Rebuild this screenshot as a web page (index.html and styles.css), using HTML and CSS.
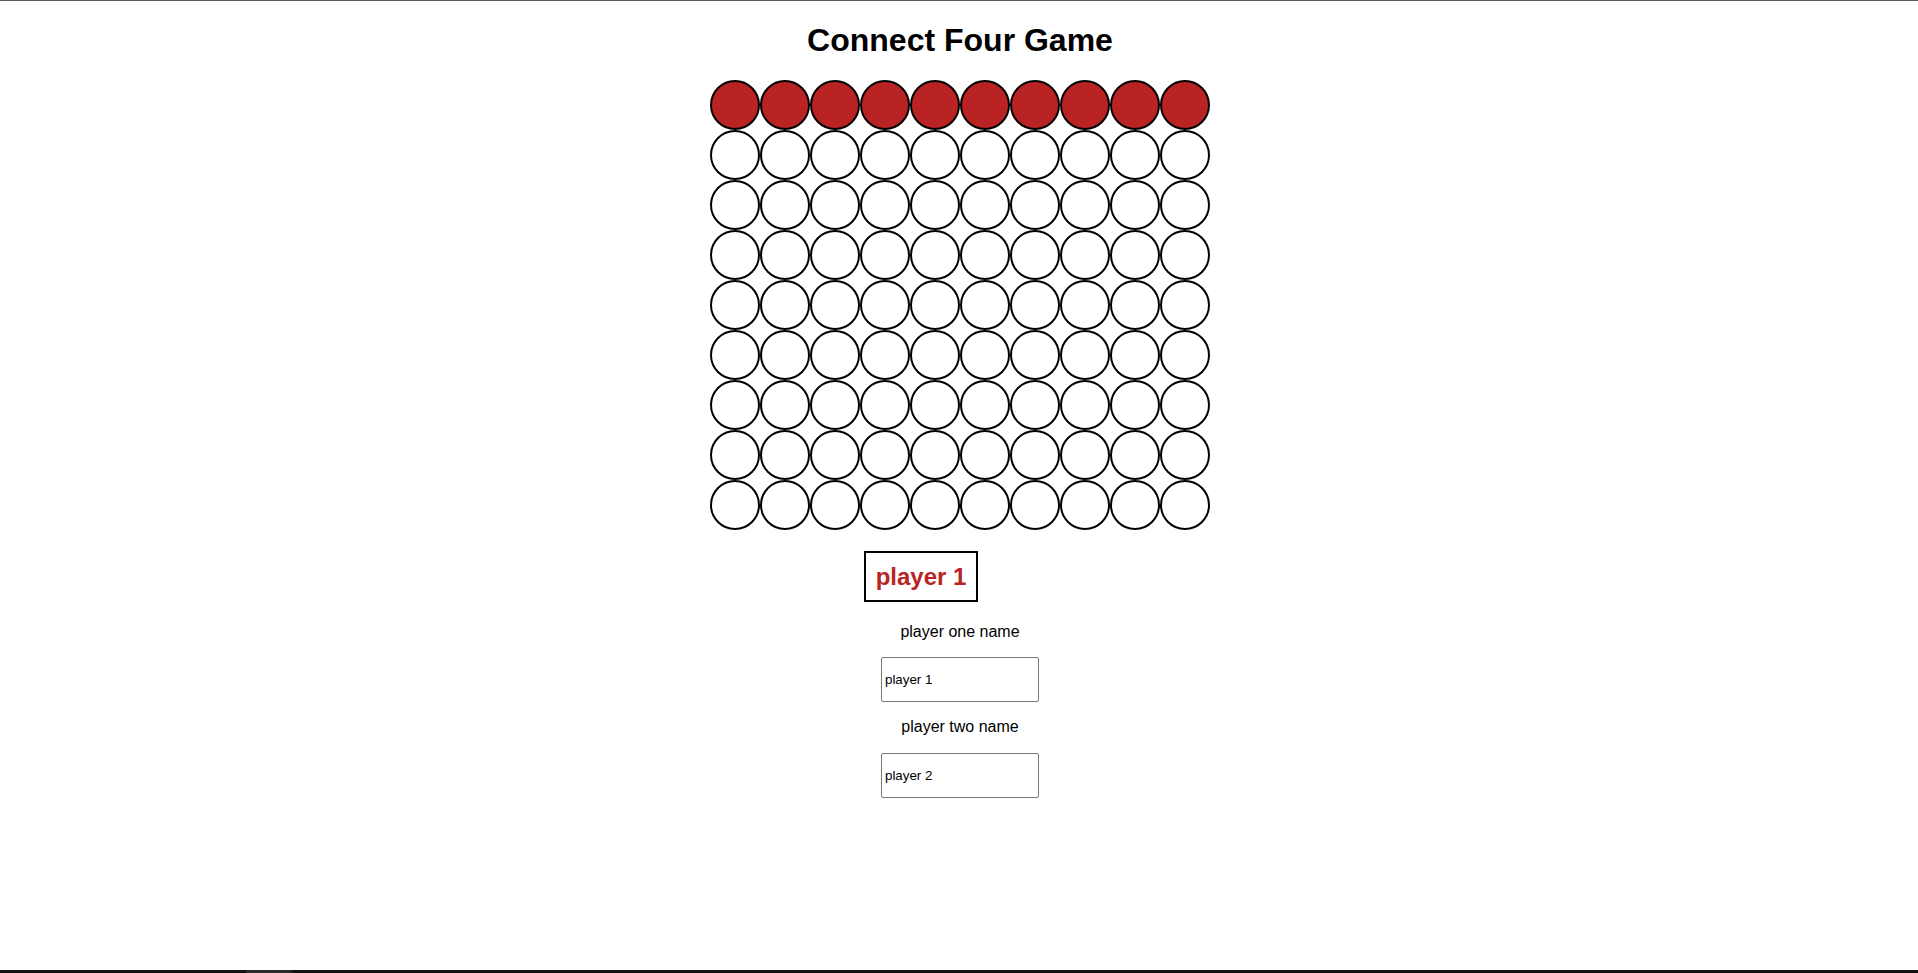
FILE: index.html
```html
<!DOCTYPE html>
<html>
<head>
<meta charset="utf-8">
<title>Connect Four Game</title>
<link rel="stylesheet" href="styles.css">
</head>
<body>
<div class="page">
  <main class="main">
    <h1 class="title">Connect Four Game</h1>
    <div class="board">
      <div class="cell red"></div><div class="cell red"></div><div class="cell red"></div><div class="cell red"></div><div class="cell red"></div><div class="cell red"></div><div class="cell red"></div><div class="cell red"></div><div class="cell red"></div><div class="cell red"></div>
      <div class="cell"></div><div class="cell"></div><div class="cell"></div><div class="cell"></div><div class="cell"></div><div class="cell"></div><div class="cell"></div><div class="cell"></div><div class="cell"></div><div class="cell"></div>
      <div class="cell"></div><div class="cell"></div><div class="cell"></div><div class="cell"></div><div class="cell"></div><div class="cell"></div><div class="cell"></div><div class="cell"></div><div class="cell"></div><div class="cell"></div>
      <div class="cell"></div><div class="cell"></div><div class="cell"></div><div class="cell"></div><div class="cell"></div><div class="cell"></div><div class="cell"></div><div class="cell"></div><div class="cell"></div><div class="cell"></div>
      <div class="cell"></div><div class="cell"></div><div class="cell"></div><div class="cell"></div><div class="cell"></div><div class="cell"></div><div class="cell"></div><div class="cell"></div><div class="cell"></div><div class="cell"></div>
      <div class="cell"></div><div class="cell"></div><div class="cell"></div><div class="cell"></div><div class="cell"></div><div class="cell"></div><div class="cell"></div><div class="cell"></div><div class="cell"></div><div class="cell"></div>
      <div class="cell"></div><div class="cell"></div><div class="cell"></div><div class="cell"></div><div class="cell"></div><div class="cell"></div><div class="cell"></div><div class="cell"></div><div class="cell"></div><div class="cell"></div>
      <div class="cell"></div><div class="cell"></div><div class="cell"></div><div class="cell"></div><div class="cell"></div><div class="cell"></div><div class="cell"></div><div class="cell"></div><div class="cell"></div><div class="cell"></div>
      <div class="cell"></div><div class="cell"></div><div class="cell"></div><div class="cell"></div><div class="cell"></div><div class="cell"></div><div class="cell"></div><div class="cell"></div><div class="cell"></div><div class="cell"></div>
    </div>
    <div class="turn">player 1</div>
    <label class="name-label" for="p1">player one name</label>
    <input class="name-input name-input-first" id="p1" type="text" value="player 1">
    <label class="name-label name-label-second" for="p2">player two name</label>
    <input class="name-input name-input-second" id="p2" type="text" value="player 2">
  </main>
  <div class="bottom-bar"><span class="bar-thumb"></span><span class="bar-edge"></span></div>
</div>
</body>
</html>
```
FILE: styles.css
```css
html, body {
  margin: 0;
  padding: 0;
  height: 100%;
  background: #ffffff;
}

body {
  font-family: "Liberation Sans", Arial, sans-serif;
  color: #000;
}

.page {
  display: flex;
  flex-direction: column;
  height: 100%;
  box-sizing: border-box;
  border-top: 1px solid #5c5c5c;
}

.main {
  flex: 1;
  display: flex;
  flex-direction: column;
  align-items: center;
  padding-left: 2px;
}

.title {
  font-size: 32px;
  font-weight: bold;
  line-height: 37px;
  margin: 21px 0 21px 0;
}

.board {
  display: grid;
  grid-template-columns: repeat(10, 50px);
  grid-auto-rows: 50px;
}

.cell {
  width: 46px;
  height: 46px;
  border: 2px solid #000;
  border-radius: 50%;
  background: #fff;
}

.cell.red {
  background: #b92323;
}

.turn {
  margin: 21px 78px 0 0;
  border: 2px solid #000;
  padding: 10px;
  font-size: 24px;
  line-height: 27px;
  font-weight: bold;
  color: #b92323;
}

.name-label {
  display: block;
  margin-top: 21px;
  font-size: 16px;
  line-height: 18px;
}

.name-label-second {
  margin-top: 16px;
}

.name-input {
  box-sizing: border-box;
  width: 158px;
  height: 45px;
  padding: 1px 2px 1px 3px;
  border: 1px solid #767676;
  border-radius: 2px;
  font-family: "Liberation Sans", Arial, sans-serif;
  font-size: 13.333px;
  color: #000;
  background: #fff;
}

.name-input-first {
  margin-top: 16px;
}

.name-input-second {
  margin-top: 17px;
}

.bottom-bar {
  height: 3px;
  background: #111111;
  display: flex;
}

.bar-thumb {
  margin-left: 246px;
  width: 44px;
  background: #2c2c2c;
}

.bar-edge {
  width: 3px;
  background: #1f1f1f;
}
```
